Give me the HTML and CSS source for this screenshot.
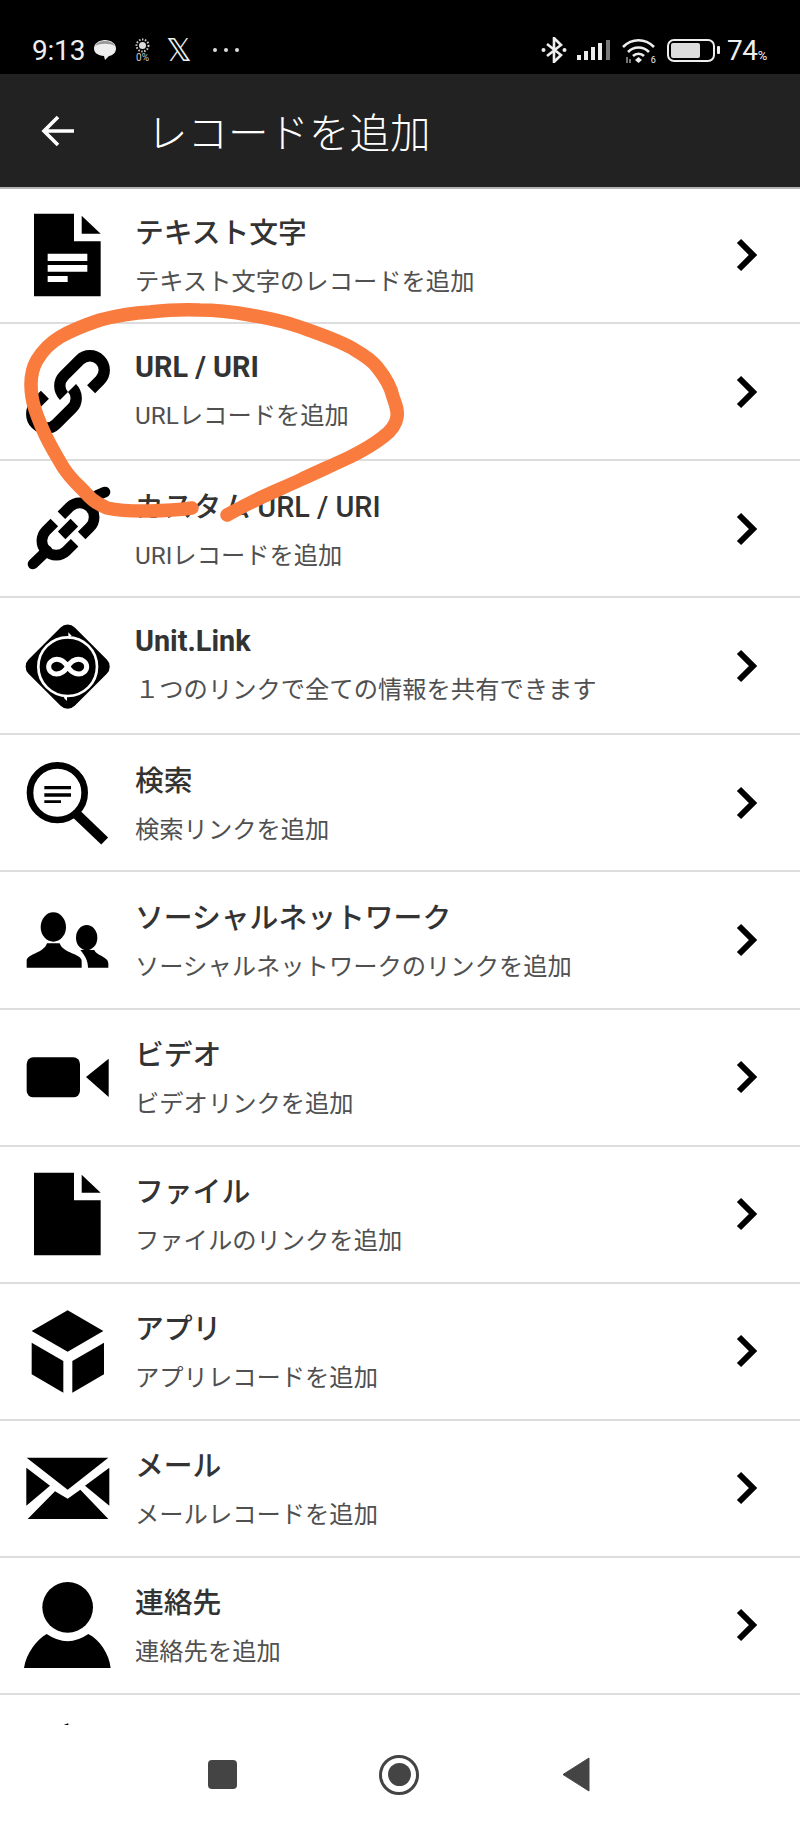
FILE: index.html
```html
<!DOCTYPE html>
<html lang="ja">
<head>
    <meta charset="UTF-8">
    <title>レコードを追加</title>
    <link rel="stylesheet" href="styles.css">
</head>
<body>
<div class="page">
    <svg class="hidden-defs" width="0" height="0">
        <symbol id="chevron" viewBox="0 0 24 36"><path d="M4 4 L18 18 L4 32" fill="none" stroke="#000" stroke-width="6"/></symbol>
    </svg>

    <div class="status">
        <div class="status-left">
            <span class="time">9:13</span>
            <svg class="st-bubble" width="22" height="20" viewBox="0 0 22 20"><path d="M11 0C17 0 22 3.500 22 8.500C22 13 18.500 15.500 15 16L11 20L10 16C4 15.500 0 13 0 8.500C0 3.500 5 0 11 0Z" fill="#eee"/><path d="M1 6C3 2 7 1 11 1C15 1 19 2 21 6C16 3 6 3 1 6Z" fill="#999"/></svg>
            <div class="st-sun">
                <svg width="15" height="15" viewBox="0 0 15 15"><circle cx="7.500" cy="7.500" r="3.500" fill="#ddd"/><circle cx="7.500" cy="7.500" r="6" fill="none" stroke="#ccc" stroke-width="2" stroke-dasharray="1.500 1.500"/></svg>
                <span>0%</span>
            </div>
            <span class="st-x">𝕏</span>
            <div class="st-dots"><i></i><i></i><i></i></div>
        </div>
        <div class="status-right">
            <svg width="26" height="26" viewBox="0 0 26 26"><path d="M6 7 L20 18 L13 25 V1 L20 8 L6 19" fill="none" stroke="#eee" stroke-width="2.600"/><circle cx="2.500" cy="13" r="2" fill="#eee"/><circle cx="23.500" cy="13" r="2" fill="#eee"/></svg>
            <svg class="st-signal" width="36" height="20" viewBox="0 0 36 20"><rect x="0" y="15" width="4" height="5" fill="#eee"/><rect x="7" y="11" width="4" height="9" fill="#eee"/><rect x="14" y="7" width="4" height="13" fill="#eee"/><rect x="21" y="3" width="4" height="17" fill="#eee"/><rect x="29" y="0" width="4" height="20" fill="#777"/></svg>
            <div class="st-wifi">
                <svg width="35" height="26" viewBox="0 0 35 26"><path d="M2 10C11 1 24 1 33 10M7 15C13 9 22 9 28 15M12 19C15 16 20 16 23 19" fill="none" stroke="#eee" stroke-width="2.600"/><path d="M17.500 20L21 23L17.500 26L14 23Z" fill="#eee"/><path d="M6 20V26M9 22V26" stroke="#999" stroke-width="1.500"/></svg>
                <span>6</span>
            </div>
            <div class="st-battery"><div class="st-battery-fill"></div></div>
            <i class="st-battery-tip"></i>
            <span class="st-percent">74<small>%</small></span>
        </div>
    </div>

    <div class="appbar">
        <svg class="back" width="34" height="32" viewBox="0 0 34 32"><path d="M33 16H3M17 2L3 16L17 30" fill="none" stroke="#fff" stroke-width="3.600"/></svg>
        <h1 class="appbar-title">レコードを追加</h1>
    </div>

    <div class="list">
        <div class="row">
            <svg class="row-icon" viewBox="0 0 270 270"><path d="M33 11h120v83h80v165H33z"/><path d="M176 17l57 54h-57z"/><path class="cut" d="M74 131h119v22H74zM74 165h119v20H74zM74 198h60v18H74z"/></svg>
            <div class="row-text">
                <div class="row-title">テキスト文字</div>
                <div class="row-sub">テキスト文字のレコードを追加</div>
            </div>
            <svg class="row-arrow"><use href="#chevron"/></svg>
        </div>
        <div class="row latin">
            <svg class="row-icon" viewBox="0 0 270 270"><g transform="rotate(-45 135 135)" fill="none" stroke="#000" stroke-width="34"><path d="M118 135a43 43 0 0 1 43-43H228a43 43 0 0 1 0 86H190"/><path d="M152 135a43 43 0 0 1-43 43H42a43 43 0 0 1 0-86H80"/></g></svg>
            <div class="row-text">
                <div class="row-title">URL / URI</div>
                <div class="row-sub">URLレコードを追加</div>
            </div>
            <svg class="row-arrow"><use href="#chevron"/></svg>
        </div>
        <div class="row">
            <svg class="row-icon" viewBox="0 0 270 270"><g fill="none" stroke="#000" stroke-width="32" stroke-linecap="round"><path d="M30 240L72 200"/><path d="M222 34L246 24"/><g transform="rotate(-45 135 135)"><path d="M120 92H85a43 43 0 0 0 0 86H120" stroke-linecap="butt"/><path d="M150 92H185a43 43 0 0 1 0 86H150" stroke-linecap="butt"/><path d="M108 135H162" stroke-linecap="butt"/></g></g></svg>
            <div class="row-text">
                <div class="row-title">カスタム URL / URI</div>
                <div class="row-sub">URIレコードを追加</div>
            </div>
            <svg class="row-arrow"><use href="#chevron"/></svg>
        </div>
        <div class="row latin">
            <svg class="row-icon" viewBox="0 0 270 270"><rect x="36" y="39" width="196" height="196" rx="30" transform="rotate(45 134 137)"/><circle class="ring" cx="134" cy="137" r="88" stroke-width="8"/><path class="cut" d="M136 34l10 10-10 8zM132 240l-10-10 10-8z"/><path class="ring" d="M134 137C122 118 112 115 101 115C88 115 77 125 77 137C77 149 88 159 101 159C112 159 122 156 134 137C146 118 156 115 167 115C180 115 191 125 191 137C191 149 180 159 167 159C156 159 146 156 134 137Z" stroke-width="15"/></svg>
            <div class="row-text">
                <div class="row-title">Unit.Link</div>
                <div class="row-sub">１つのリンクで全ての情報を共有できます</div>
            </div>
            <svg class="row-arrow"><use href="#chevron"/></svg>
        </div>
        <div class="row">
            <svg class="row-icon" viewBox="0 0 270 270"><circle cx="103" cy="104" r="82" fill="none" stroke="#000" stroke-width="20"/><path d="M156 164L245 249" stroke="#000" stroke-width="30"/><path d="M64 84h80v10H64zM64 106h80v10H64zM64 127h50v8H64z"/></svg>
            <div class="row-text">
                <div class="row-title">検索</div>
                <div class="row-sub">検索リンクを追加</div>
            </div>
            <svg class="row-arrow"><use href="#chevron"/></svg>
        </div>
        <div class="row">
            <svg class="row-icon" viewBox="0 0 270 270"><ellipse cx="91" cy="96" rx="38" ry="44"/><path d="M11 218V198C11 176 62 176 72 145H110C120 176 176 176 176 198V218Z"/><ellipse cx="191" cy="128" rx="32" ry="38"/><path d="M195 218C195 195 185 182 172 165H214C220 182 256 185 256 205V218Z"/></svg>
            <div class="row-text">
                <div class="row-title">ソーシャルネットワーク</div>
                <div class="row-sub">ソーシャルネットワークのリンクを追加</div>
            </div>
            <svg class="row-arrow"><use href="#chevron"/></svg>
        </div>
        <div class="row">
            <svg class="row-icon" viewBox="0 0 270 270"><rect x="11" y="76" width="160" height="120" rx="20"/><path d="M189 135L257 80V195Z"/></svg>
            <div class="row-text">
                <div class="row-title">ビデオ</div>
                <div class="row-sub">ビデオリンクを追加</div>
            </div>
            <svg class="row-arrow"><use href="#chevron"/></svg>
        </div>
        <div class="row">
            <svg class="row-icon" viewBox="0 0 270 270"><path d="M33 11h120v83h80v165H33z"/><path d="M176 17l57 54h-57z"/></svg>
            <div class="row-text">
                <div class="row-title">ファイル</div>
                <div class="row-sub">ファイルのリンクを追加</div>
            </div>
            <svg class="row-arrow"><use href="#chevron"/></svg>
        </div>
        <div class="row">
            <svg class="row-icon" viewBox="0 0 270 270"><path d="M134 13L241 75L134 137L26 75Z"/><path d="M26 110L121 165V260L26 205Z"/><path d="M243 110L148 165V260L243 205Z"/></svg>
            <div class="row-text">
                <div class="row-title">アプリ</div>
                <div class="row-sub">アプリレコードを追加</div>
            </div>
            <svg class="row-arrow"><use href="#chevron"/></svg>
        </div>
        <div class="row">
            <svg class="row-icon" viewBox="0 0 270 270"><path d="M11 44H256L134 140Z"/><path d="M10 74L81 128L10 188Z"/><path d="M259 74L186 128L259 188Z"/><path d="M14 228L96 145L134 167L172 140L256 228Z"/></svg>
            <div class="row-text">
                <div class="row-title">メール</div>
                <div class="row-sub">メールレコードを追加</div>
            </div>
            <svg class="row-arrow"><use href="#chevron"/></svg>
        </div>
        <div class="row">
            <svg class="row-icon" viewBox="0 0 270 270"><circle cx="134" cy="82" r="76"/><path d="M3 264C10 220 40 180 71 162Q134 205 196 162C230 180 258 220 263 264Z"/></svg>
            <div class="row-text">
                <div class="row-title">連絡先</div>
                <div class="row-sub">連絡先を追加</div>
            </div>
            <svg class="row-arrow"><use href="#chevron"/></svg>
        </div>
        <div class="row">
            <svg class="row-icon" viewBox="0 0 270 270"><path d="M135 16L100 30H140Z"/></svg>
        </div>
    </div>

    <div class="navbar">
        <div class="nav-item"><div class="nav-square"></div></div>
        <div class="nav-item"><div class="nav-circle"><div class="nav-dot"></div></div></div>
        <div class="nav-item"><svg width="28" height="35" viewBox="0 0 28 35"><path d="M27 1V34L1 17.500Z" fill="#444" stroke="#444" stroke-linejoin="round"/></svg></div>
    </div>

    <svg class="scribble" viewBox="0 0 800 1822"><path d="M192 508C170 511 130 513 107 508C95 503 90 498 83 490C75 482 70 478 63 467C55 453 49 444 43 430C38 418 34 410 32 397C30 384 30 372 37 360C43 350 50 343 60 337C72 330 85 325 100 320C115 316 132 313 150 312C167 310 183 309 200 310C217 310 233 312 250 315C267 318 283 321 300 327C317 333 335 339 350 347C360 353 370 358 377 367C385 377 391 387 393 397C396 405 398 410 397 417C396 425 391 431 383 437C373 445 362 451 350 457C333 465 317 472 300 480C287 486 273 492 260 498C249 503 238 509 227 515" fill="none" stroke="#f97b3e" stroke-width="13.500" stroke-linecap="round"/></svg>
</div>
</body>
</html>
```

FILE: styles.css
```css
*{box-sizing:border-box;}
html,body{margin:0;padding:0;}
body{background:#fff;font-family:Roboto,"Noto Sans CJK JP",sans-serif;}
.page{width:800px;height:1822px;position:relative;overflow:hidden;display:flex;flex-direction:column;}
.hidden-defs{position:absolute;}

/* status bar */
.status{height:74px;flex:none;padding:26px 33px 0 32px;background:#000;color:#eee;display:flex;align-items:center;justify-content:space-between;}
.status-left,.status-right{display:flex;align-items:center;}
.time{width:53px;font-size:28px;letter-spacing:-.2px;}
.st-bubble{margin-left:9px;}
.st-sun{margin-left:19px;width:15px;display:flex;flex-direction:column;align-items:center;}
.st-sun svg{display:block;}
.st-sun span{font-size:10px;line-height:10px;color:#ccc;}
.st-x{margin-left:16px;width:24px;font-family:"DejaVu Sans",sans-serif;font-size:32px;line-height:30px;}
.st-dots{margin-left:23px;width:26px;display:flex;justify-content:space-between;}
.st-dots i{width:4px;height:4px;border-radius:50%;background:#ddd;}
.st-signal{margin-left:10px;}
.st-wifi{margin-left:8px;width:35px;position:relative;display:flex;}
.st-wifi span{position:absolute;right:0;bottom:-2px;font-size:9px;}
.st-battery{margin-left:11px;width:48px;height:23px;border:2.500px solid #eee;border-radius:7px;padding:2px;}
.st-battery-fill{width:74%;height:100%;background:#ddd;border-radius:2px;}
.st-battery-tip{margin-left:2px;width:3px;height:8px;background:#eee;border-radius:1px;}
.st-percent{margin-left:7px;font-size:28px;letter-spacing:-.3px;}
.st-percent small{font-size:13px;}

/* app bar */
.appbar{height:113px;flex:none;background:#222;display:flex;align-items:center;position:relative;box-shadow:0 2px 0 #b5b5b5;padding-left:41px;}
.back{flex:none;margin-right:76px;}
.appbar-title{margin:0 0 -8px -4px;font-size:40.500px;font-weight:300;color:#fff;line-height:1.2;}

/* list */
.list{height:1538px;flex:none;overflow:hidden;}
.row{height:137.1px;border-bottom:2px solid #ddd;display:flex;align-items:center;padding:0 41px 0 23px;}
.row-icon{width:90px;height:90px;flex:none;margin-right:22px;}
.row-icon .cut{fill:#fff;}
.row-icon .ring{fill:none;stroke:#fff;}
.row-text{flex:1;padding-top:4px;}
.row.latin .row-text{padding-bottom:5px;}
.row-title{font-size:28.800px;font-weight:500;line-height:36px;color:#333;margin-bottom:14px;}
.row.latin .row-title{font-weight:700;}
.row-sub{font-size:24.300px;line-height:34px;color:#505050;font-weight:400;}
.row-arrow{width:24px;height:36px;flex:none;}

/* bottom nav */
.navbar{flex:1;background:#fff;display:flex;justify-content:center;align-items:center;padding:2px 2px 0 0;}
.nav-item{width:177px;display:flex;justify-content:center;align-items:center;}
.nav-square{width:29px;height:29px;border-radius:4px;background:#444;}
.nav-circle{width:40px;height:40px;border:3.500px solid #444;border-radius:50%;display:flex;justify-content:center;align-items:center;}
.nav-dot{width:23px;height:23px;border-radius:50%;background:#444;}

/* hand drawn mark on top of the screenshot */
.scribble{position:absolute;left:0;top:0;width:800px;height:1822px;pointer-events:none;}
```
